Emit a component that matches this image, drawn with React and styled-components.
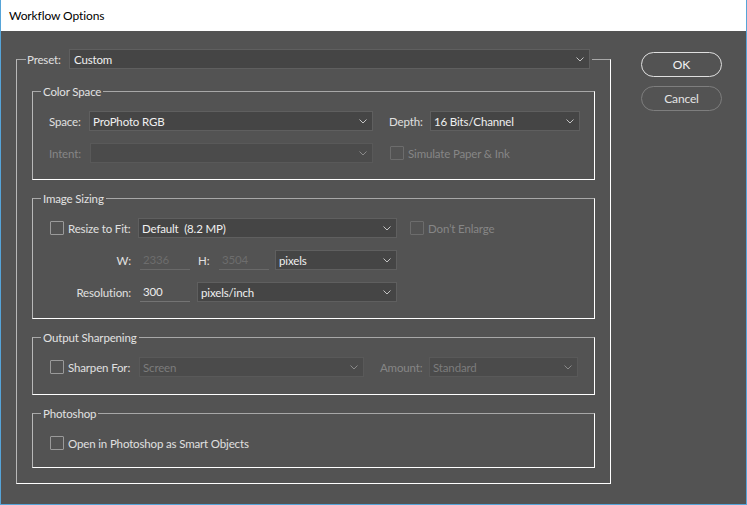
import React from "react";
import styled, { createGlobalStyle } from "styled-components";

const GlobalStyle = createGlobalStyle`
  html, body { margin: 0; padding: 0; background: #535353; }
  body { font-family: Lato, "Noto Sans", sans-serif; font-size: 11.5px; letter-spacing: -0.15px; }
  * { box-sizing: border-box; }
`;

const Window = styled.div`
  width: 747px;
  height: 505px;
  border: 1px solid #56a4d8;
  border-top: none;
  background: #535353;
  display: flex;
  flex-direction: column;
`;

const TitleBar = styled.div`
  height: 31px;
  background: #ffffff;
  color: #000;
  display: flex;
  align-items: center;
  padding-left: 8px;
  font-size: 12px;
  letter-spacing: -0.1px;
`;

const Body = styled.div`
  flex: 1;
  display: flex;
  align-items: flex-start;
  padding: 18px 0 0 15px;
  gap: 30px;
`;

const Fieldset = styled.fieldset`
  margin: 0;
  padding: 0;
  min-width: 0;
  width: ${(p) => (p.$w ? `${p.$w}px` : "100%")};
  border: 1px solid;
  border-color: #a8a8a8 #ffffff #ffffff #b8b8b8;
`;

const Legend = styled.legend`
  margin-left: 8px;
  padding: 0 2px;
  line-height: 17px;
  color: #e2e2e2;
`;

const PresetLegend = styled.legend`
  margin-left: 9px;
  padding: 0 2px 0 1px;
`;

const LegendRow = styled.div`
  display: flex;
  align-items: center;
`;

const OuterContent = styled.div`
  padding: 14px 15px 15px 15px;
  display: flex;
  flex-direction: column;
  gap: 10px;
`;

const GroupBody = styled.div`
  padding: ${(p) => p.$pad};
  display: flex;
  flex-direction: column;
  gap: 12px;
`;

const Row = styled.div`
  display: flex;
  align-items: center;
  height: 20px;
`;

const Label = styled.span`
  flex: none;
  width: ${(p) => (p.$w ? `${p.$w}px` : "auto")};
  text-align: ${(p) => (p.$right ? "right" : "left")};
  margin-right: ${(p) => (p.$mr ? `${p.$mr}px` : "0")};
  color: ${(p) => (p.$disabled ? "#868686" : "#e0e0e0")};
  white-space: nowrap;
`;

const SelectBox = styled.div`
  flex: none;
  width: ${(p) => p.$w}px;
  height: 20px;
  margin-left: ${(p) => (p.$ml ? `${p.$ml}px` : "0")};
  display: flex;
  align-items: center;
  justify-content: space-between;
  padding: 0 5px 0 ${(p) => (p.$pl ? p.$pl : 3)}px;
  background: ${(p) => (p.$disabled ? "#4b4b4b" : "#454545")};
  border: 1px solid ${(p) => (p.$disabled ? "#595959" : "#5f5f5f")};
  color: ${(p) => (p.$disabled ? "#7c7c7c" : "#f0f0f0")};
  white-space: pre;
`;

const Chevron = ({ color }) => (
  <svg width="8" height="5" viewBox="0 0 8 5">
    <polyline points="0.5,0.5 4,4 7.5,0.5" fill="none" stroke={color} strokeWidth="1" />
  </svg>
);

const Select = ({ w, value, disabled, ml, pl }) => (
  <SelectBox $w={w} $disabled={disabled} $ml={ml} $pl={pl}>
    <span>{value}</span>
    <Chevron color={disabled ? "#8a8a8a" : "#c4c4c4"} />
  </SelectBox>
);

const Box = styled.span`
  flex: none;
  width: 14px;
  height: 14px;
  margin-left: ${(p) => (p.$ml ? `${p.$ml}px` : "0")};
  margin-right: 4px;
  border: 1px solid ${(p) => (p.$disabled ? "#6c6c6c" : "#9a9a9a")};
  border-radius: 1px;
`;

const Field = styled.div`
  flex: none;
  width: ${(p) => p.$w}px;
  height: 20px;
  margin-right: ${(p) => (p.$mr ? `${p.$mr}px` : "0")};
  padding-left: 3px;
  display: flex;
  align-items: center;
  border-bottom: 1px solid ${(p) => (p.$disabled ? "#696969" : "#747474")};
  color: ${(p) => (p.$disabled ? "#6d6d6d" : "#ececec")};
`;

const Buttons = styled.div`
  margin-top: 3px;
  display: flex;
  flex-direction: column;
  gap: 9px;
`;

const Button = styled.div`
  width: 81px;
  height: 25px;
  border-radius: 13px;
  border: 1px solid ${(p) => (p.$primary ? "#e0e0e0" : "#7e7e7e")};
  color: ${(p) => (p.$primary ? "#f4f4f4" : "#e4e4e4")};
  font-size: 12px;
  display: flex;
  align-items: center;
  justify-content: center;
`;

export default function App() {
  return (
    <>
      <GlobalStyle />
      <Window>
        <TitleBar>Workflow Options</TitleBar>
        <Body>
          <Fieldset $w={595}>
            <PresetLegend>
              <LegendRow>
                <Label $w={42}>Preset:</Label>
                <Select w={521} value="Custom" pl={4} />
              </LegendRow>
            </PresetLegend>
            <OuterContent>
              <Fieldset>
                <Legend>Color Space</Legend>
                <GroupBody $pad="11px 15px 16px 16px">
                  <Row>
                    <Label $w={40}>Space:</Label>
                    <Select w={284} value="ProPhoto RGB" />
                    <Label $w={41} style={{ marginLeft: 16 }}>Depth:</Label>
                    <Select w={150} value="16 Bits/Channel" />
                  </Row>
                  <Row>
                    <Label $w={41} $disabled>Intent:</Label>
                    <Select w={283} value="" disabled />
                    <Box $disabled $ml={17} />
                    <Label $disabled>Simulate Paper &amp; Ink</Label>
                  </Row>
                </GroupBody>
              </Fieldset>
              <Fieldset>
                <Legend>Image Sizing</Legend>
                <GroupBody $pad="11px 15px 16px 17px">
                  <Row>
                    <Box />
                    <Label $w={70}>Resize to Fit:</Label>
                    <Select w={259} value="Default  (8.2 MP)" />
                    <Box $disabled $ml={13} />
                    <Label $disabled>Don’t Enlarge</Label>
                  </Row>
                  <Row>
                    <Label $w={81} $right $mr={9}>W:</Label>
                    <Field $w={50} $mr={8} $disabled>2336</Field>
                    <Label $w={21}>H:</Label>
                    <Field $w={50} $mr={6} $disabled>3504</Field>
                    <Select w={122} value="pixels" />
                  </Row>
                  <Row>
                    <Label $w={81} $right $mr={9}>Resolution:</Label>
                    <Field $w={50} $mr={7}>300</Field>
                    <Select w={200} value="pixels/inch" />
                  </Row>
                </GroupBody>
              </Fieldset>
              <Fieldset>
                <Legend>Output Sharpening</Legend>
                <GroupBody $pad="11px 15px 17px 17px">
                  <Row>
                    <Box />
                    <Label $w={71}>Sharpen For:</Label>
                    <Select w={225} value="Screen" disabled />
                    <Label $w={49} $disabled style={{ marginLeft: 16 }}>Amount:</Label>
                    <Select w={149} value="Standard" disabled />
                  </Row>
                </GroupBody>
              </Fieldset>
              <Fieldset>
                <Legend>Photoshop</Legend>
                <GroupBody $pad="11px 15px 14px 17px">
                  <Row>
                    <Box />
                    <Label>Open in Photoshop as Smart Objects</Label>
                  </Row>
                </GroupBody>
              </Fieldset>
            </OuterContent>
          </Fieldset>
          <Buttons>
            <Button $primary>OK</Button>
            <Button>Cancel</Button>
          </Buttons>
        </Body>
      </Window>
    </>
  );
}
